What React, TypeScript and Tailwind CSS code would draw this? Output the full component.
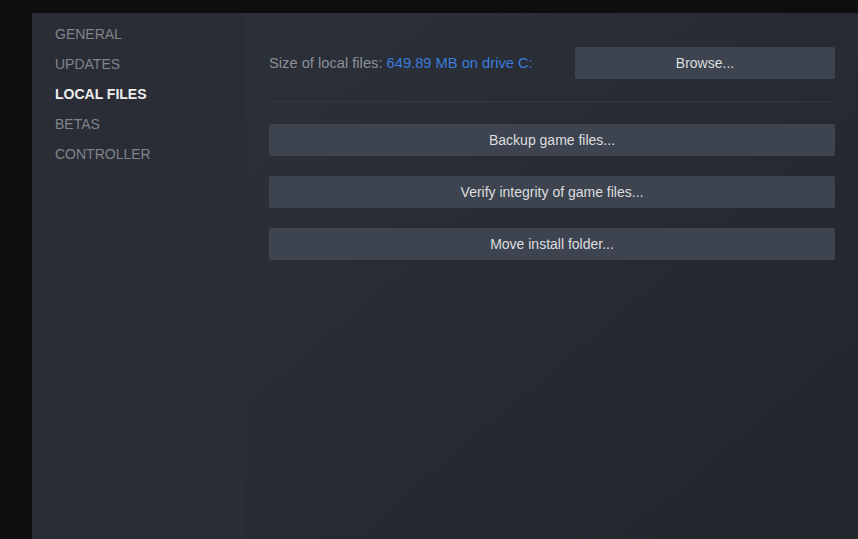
import React from 'react';

const sections = ['General', 'Updates', 'Local Files', 'Betas', 'Controller'];

const ActionButton = ({ label, className = '' }: { label: string; className?: string }) => (
    <button
        className={`h-8 rounded-[2px] bg-[#3d4450] text-[14px] text-[#dcdedf] hover:bg-[#4a5260] ${className}`}
    >
        {label}
    </button>
);

const App = () => {
    return (
        <div
            className="h-[539px] w-[858px] overflow-hidden bg-[#0e0e0e] pl-8 pt-[13px]"
            style={{ fontFamily: '"Liberation Sans", Arial, sans-serif' }}
        >
            <div className="flex h-full">
                {/* left nav */}
                <div className="w-[213px] shrink-0 bg-[#2a2d36] pt-[6px]">
                    {sections.map((s) => (
                        <div
                            key={s}
                            className={`flex h-[30px] items-center pl-[23px] text-[14px] uppercase ${s === 'Local Files' ? 'font-bold text-[#eeeeee]' : 'text-[#818489]'}`}
                        >
                            {s}
                        </div>
                    ))}
                </div>

                {/* content */}
                <div className="flex-1 bg-gradient-to-br from-[#2c3039] to-[#22252c] pl-6 pr-[23px] pt-[34px]">
                    <div className="flex items-center justify-between">
                        <span className="text-[14.7px] text-[#8b9098]">
                            Size of local files: <span className="text-[#3a7bdc]">649.89 MB on drive C:</span>
                        </span>
                        <ActionButton label="Browse..." className="w-[260px]" />
                    </div>

                    <div className="my-[22px] h-px bg-[#343841]" />

                    <div className="flex flex-col gap-5">
                        <ActionButton label="Backup game files..." />
                        <ActionButton label="Verify integrity of game files..." />
                        <ActionButton label="Move install folder..." />
                    </div>
                </div>
            </div>
        </div>
    );
};

export default App;
